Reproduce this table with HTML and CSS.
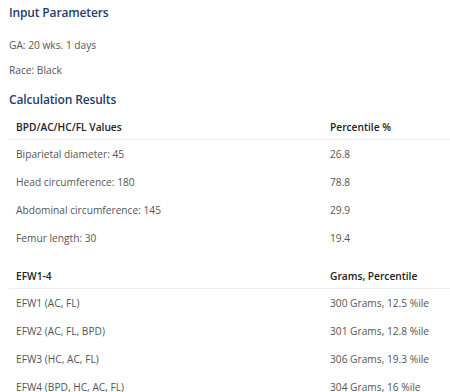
FILE: index.html
```html
<!DOCTYPE html>
<html>
<head>
<meta charset="utf-8">
<link rel="stylesheet" href="styles.css">
</head>
<body>
<div class="page">
  <h2 class="section-title">Input Parameters</h2>
  <p class="param">GA: 20 wks. 1 days</p>
  <p class="param">Race: Black</p>
  <h2 class="section-title results-title">Calculation Results</h2>
  <table class="results">
    <thead>
      <tr><th class="col-name">BPD/AC/HC/FL Values</th><th>Percentile %</th></tr>
    </thead>
    <tbody>
      <tr><td>Biparietal diameter: 45</td><td>26.8</td></tr>
      <tr><td>Head circumference: 180</td><td>78.8</td></tr>
      <tr><td>Abdominal circumference: 145</td><td>29.9</td></tr>
      <tr><td>Femur length: 30</td><td>19.4</td></tr>
    </tbody>
  </table>
  <table class="results efw">
    <thead>
      <tr><th class="col-name">EFW1-4</th><th>Grams, Percentile</th></tr>
    </thead>
    <tbody>
      <tr><td>EFW1 (AC, FL)</td><td>300 Grams, 12.5 %ile</td></tr>
      <tr><td>EFW2 (AC, FL, BPD)</td><td>301 Grams, 12.8 %ile</td></tr>
      <tr><td>EFW3 (HC, AC, FL)</td><td>306 Grams, 19.3 %ile</td></tr>
      <tr><td>EFW4 (BPD, HC, AC, FL)</td><td>304 Grams, 16 %ile</td></tr>
    </tbody>
  </table>
</div>
</body>
</html>
```
FILE: styles.css
```css
html, body {
  margin: 0;
  padding: 0;
  background: #fff;
}
body {
  font-family: "Open Sans", "Liberation Sans", sans-serif;
  color: #555;
  font-size: 10.2px;
}
.page {
  padding: 3px 0 0 9px;
}
.section-title {
  margin: 0;
  font-size: 12px;
  font-weight: 600;
  letter-spacing: -0.15px;
  color: #1d3d70;
  line-height: 20px;
}
.param {
  margin: 0;
  line-height: 25px;
}
.section-title + .param {
  margin-top: 10px;
}
.results-title {
  margin-top: 7px;
}
.results {
  width: 100%;
  border-collapse: collapse;
  margin-top: 2px;
}
.results th {
  text-align: left;
  font-weight: 600;
  color: #222;
  height: 25px;
  padding: 2px 7px 0;
  border-bottom: 1px solid #eee;
}
.results td {
  height: 28px;
  padding: 0 7px;
}
.results .col-name {
  width: 300px;
}
.efw {
  margin-top: 9px;
}
```
